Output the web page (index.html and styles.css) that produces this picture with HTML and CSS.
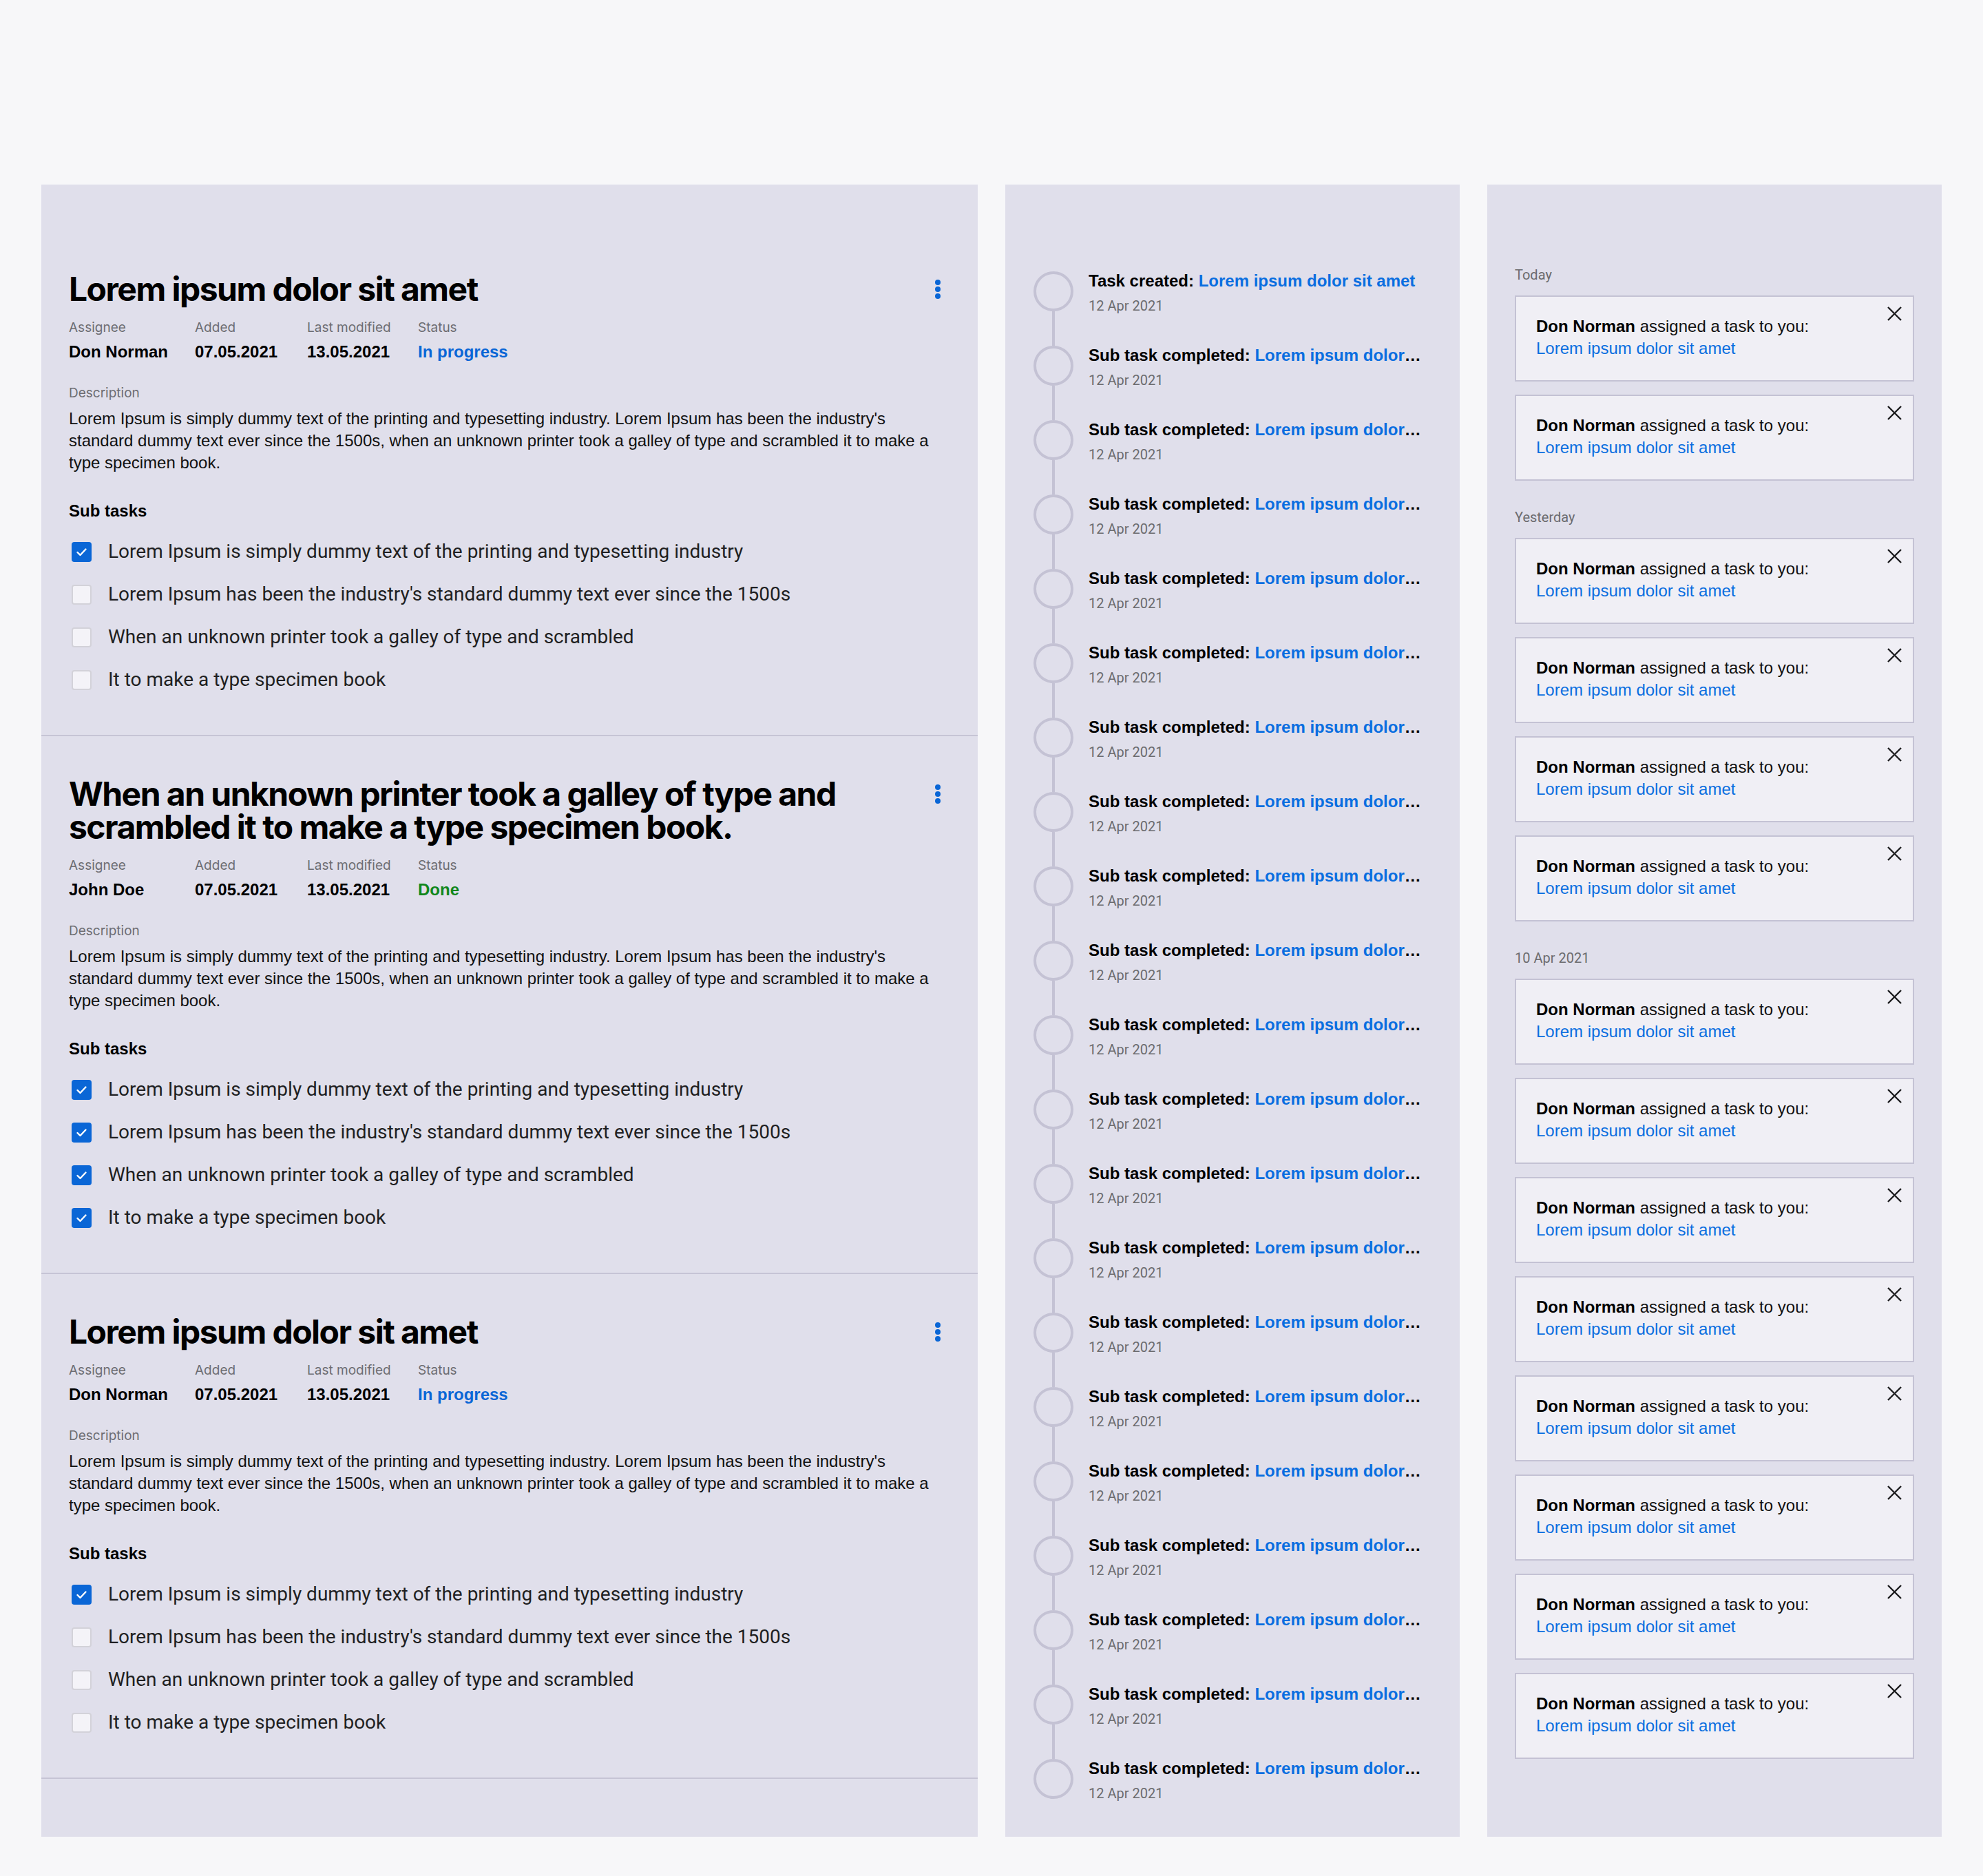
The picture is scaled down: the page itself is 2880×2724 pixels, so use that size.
FILE: index.html
```html
<!DOCTYPE html>
<html lang="en">
<head>
<meta charset="utf-8">
<title>Tasks</title>
<link rel="stylesheet" href="styles.css">
</head>
<body>
<main class="board">
  <section class="panel tasks">
    <article class="task">
      <header class="task-head">
        <h2 class="task-title">Lorem ipsum dolor sit amet</h2>
        <button class="kebab" aria-label="More"><svg width="24" height="32" viewBox="0 0 24 32"><circle cx="12" cy="6" r="4"/><circle cx="12" cy="16" r="4"/><circle cx="12" cy="26" r="4"/></svg></button>
      </header>
      <div class="meta">
        <div class="meta-col"><div class="meta-label">Assignee</div><div class="meta-value">Don Norman</div></div>
        <div class="meta-col"><div class="meta-label">Added</div><div class="meta-value">07.05.2021</div></div>
        <div class="meta-col"><div class="meta-label">Last modified</div><div class="meta-value">13.05.2021</div></div>
        <div class="meta-col"><div class="meta-label">Status</div><div class="meta-value status-progress">In progress</div></div>
      </div>
      <div class="desc-label">Description</div>
      <p class="desc">Lorem Ipsum is simply dummy text of the printing and typesetting industry. Lorem Ipsum has been the industry's standard dummy text ever since the 1500s, when an unknown printer took a galley of type and scrambled it to make a type specimen book.</p>
      <h3 class="sub-head">Sub tasks</h3>
      <ul class="subtasks">
        <li class="subtask"><span class="check on"><svg width="29" height="29" viewBox="0 0 29 29"><path d="M8.5 15 L12.5 19 L20.5 10.5"/></svg></span><span>Lorem Ipsum is simply dummy text of the printing and typesetting industry</span></li>
        <li class="subtask"><span class="check"></span><span>Lorem Ipsum has been the industry's standard dummy text ever since the 1500s</span></li>
        <li class="subtask"><span class="check"></span><span>When an unknown printer took a galley of type and scrambled</span></li>
        <li class="subtask"><span class="check"></span><span>It to make a type specimen book</span></li>
      </ul>
    </article>

    <article class="task">
      <header class="task-head">
        <h2 class="task-title">When an unknown printer took a galley of type and scrambled it to make a type specimen book.</h2>
        <button class="kebab" aria-label="More"><svg width="24" height="32" viewBox="0 0 24 32"><circle cx="12" cy="6" r="4"/><circle cx="12" cy="16" r="4"/><circle cx="12" cy="26" r="4"/></svg></button>
      </header>
      <div class="meta">
        <div class="meta-col"><div class="meta-label">Assignee</div><div class="meta-value">John Doe</div></div>
        <div class="meta-col"><div class="meta-label">Added</div><div class="meta-value">07.05.2021</div></div>
        <div class="meta-col"><div class="meta-label">Last modified</div><div class="meta-value">13.05.2021</div></div>
        <div class="meta-col"><div class="meta-label">Status</div><div class="meta-value status-done">Done</div></div>
      </div>
      <div class="desc-label">Description</div>
      <p class="desc">Lorem Ipsum is simply dummy text of the printing and typesetting industry. Lorem Ipsum has been the industry's standard dummy text ever since the 1500s, when an unknown printer took a galley of type and scrambled it to make a type specimen book.</p>
      <h3 class="sub-head">Sub tasks</h3>
      <ul class="subtasks">
        <li class="subtask"><span class="check on"><svg width="29" height="29" viewBox="0 0 29 29"><path d="M8.5 15 L12.5 19 L20.5 10.5"/></svg></span><span>Lorem Ipsum is simply dummy text of the printing and typesetting industry</span></li>
        <li class="subtask"><span class="check on"><svg width="29" height="29" viewBox="0 0 29 29"><path d="M8.5 15 L12.5 19 L20.5 10.5"/></svg></span><span>Lorem Ipsum has been the industry's standard dummy text ever since the 1500s</span></li>
        <li class="subtask"><span class="check on"><svg width="29" height="29" viewBox="0 0 29 29"><path d="M8.5 15 L12.5 19 L20.5 10.5"/></svg></span><span>When an unknown printer took a galley of type and scrambled</span></li>
        <li class="subtask"><span class="check on"><svg width="29" height="29" viewBox="0 0 29 29"><path d="M8.5 15 L12.5 19 L20.5 10.5"/></svg></span><span>It to make a type specimen book</span></li>
      </ul>
    </article>

    <article class="task">
      <header class="task-head">
        <h2 class="task-title">Lorem ipsum dolor sit amet</h2>
        <button class="kebab" aria-label="More"><svg width="24" height="32" viewBox="0 0 24 32"><circle cx="12" cy="6" r="4"/><circle cx="12" cy="16" r="4"/><circle cx="12" cy="26" r="4"/></svg></button>
      </header>
      <div class="meta">
        <div class="meta-col"><div class="meta-label">Assignee</div><div class="meta-value">Don Norman</div></div>
        <div class="meta-col"><div class="meta-label">Added</div><div class="meta-value">07.05.2021</div></div>
        <div class="meta-col"><div class="meta-label">Last modified</div><div class="meta-value">13.05.2021</div></div>
        <div class="meta-col"><div class="meta-label">Status</div><div class="meta-value status-progress">In progress</div></div>
      </div>
      <div class="desc-label">Description</div>
      <p class="desc">Lorem Ipsum is simply dummy text of the printing and typesetting industry. Lorem Ipsum has been the industry's standard dummy text ever since the 1500s, when an unknown printer took a galley of type and scrambled it to make a type specimen book.</p>
      <h3 class="sub-head">Sub tasks</h3>
      <ul class="subtasks">
        <li class="subtask"><span class="check on"><svg width="29" height="29" viewBox="0 0 29 29"><path d="M8.5 15 L12.5 19 L20.5 10.5"/></svg></span><span>Lorem Ipsum is simply dummy text of the printing and typesetting industry</span></li>
        <li class="subtask"><span class="check"></span><span>Lorem Ipsum has been the industry's standard dummy text ever since the 1500s</span></li>
        <li class="subtask"><span class="check"></span><span>When an unknown printer took a galley of type and scrambled</span></li>
        <li class="subtask"><span class="check"></span><span>It to make a type specimen book</span></li>
      </ul>
    </article>
  </section>

  <section class="panel timeline">
    <ol class="tl">
      <li class="tl-item"><div class="tl-rail"><span class="tl-dot"></span><span class="tl-line"></span></div><div class="tl-body"><div class="tl-title">Task created: <a href="#">Lorem ipsum dolor sit amet</a></div><div class="tl-date">12 Apr 2021</div></div></li>
      <li class="tl-item"><div class="tl-rail"><span class="tl-dot"></span><span class="tl-line"></span></div><div class="tl-body"><div class="tl-title">Sub task completed: <a href="#">Lorem ipsum dolor sit amet</a></div><div class="tl-date">12 Apr 2021</div></div></li>
      <li class="tl-item"><div class="tl-rail"><span class="tl-dot"></span><span class="tl-line"></span></div><div class="tl-body"><div class="tl-title">Sub task completed: <a href="#">Lorem ipsum dolor sit amet</a></div><div class="tl-date">12 Apr 2021</div></div></li>
      <li class="tl-item"><div class="tl-rail"><span class="tl-dot"></span><span class="tl-line"></span></div><div class="tl-body"><div class="tl-title">Sub task completed: <a href="#">Lorem ipsum dolor sit amet</a></div><div class="tl-date">12 Apr 2021</div></div></li>
      <li class="tl-item"><div class="tl-rail"><span class="tl-dot"></span><span class="tl-line"></span></div><div class="tl-body"><div class="tl-title">Sub task completed: <a href="#">Lorem ipsum dolor sit amet</a></div><div class="tl-date">12 Apr 2021</div></div></li>
      <li class="tl-item"><div class="tl-rail"><span class="tl-dot"></span><span class="tl-line"></span></div><div class="tl-body"><div class="tl-title">Sub task completed: <a href="#">Lorem ipsum dolor sit amet</a></div><div class="tl-date">12 Apr 2021</div></div></li>
      <li class="tl-item"><div class="tl-rail"><span class="tl-dot"></span><span class="tl-line"></span></div><div class="tl-body"><div class="tl-title">Sub task completed: <a href="#">Lorem ipsum dolor sit amet</a></div><div class="tl-date">12 Apr 2021</div></div></li>
      <li class="tl-item"><div class="tl-rail"><span class="tl-dot"></span><span class="tl-line"></span></div><div class="tl-body"><div class="tl-title">Sub task completed: <a href="#">Lorem ipsum dolor sit amet</a></div><div class="tl-date">12 Apr 2021</div></div></li>
      <li class="tl-item"><div class="tl-rail"><span class="tl-dot"></span><span class="tl-line"></span></div><div class="tl-body"><div class="tl-title">Sub task completed: <a href="#">Lorem ipsum dolor sit amet</a></div><div class="tl-date">12 Apr 2021</div></div></li>
      <li class="tl-item"><div class="tl-rail"><span class="tl-dot"></span><span class="tl-line"></span></div><div class="tl-body"><div class="tl-title">Sub task completed: <a href="#">Lorem ipsum dolor sit amet</a></div><div class="tl-date">12 Apr 2021</div></div></li>
      <li class="tl-item"><div class="tl-rail"><span class="tl-dot"></span><span class="tl-line"></span></div><div class="tl-body"><div class="tl-title">Sub task completed: <a href="#">Lorem ipsum dolor sit amet</a></div><div class="tl-date">12 Apr 2021</div></div></li>
      <li class="tl-item"><div class="tl-rail"><span class="tl-dot"></span><span class="tl-line"></span></div><div class="tl-body"><div class="tl-title">Sub task completed: <a href="#">Lorem ipsum dolor sit amet</a></div><div class="tl-date">12 Apr 2021</div></div></li>
      <li class="tl-item"><div class="tl-rail"><span class="tl-dot"></span><span class="tl-line"></span></div><div class="tl-body"><div class="tl-title">Sub task completed: <a href="#">Lorem ipsum dolor sit amet</a></div><div class="tl-date">12 Apr 2021</div></div></li>
      <li class="tl-item"><div class="tl-rail"><span class="tl-dot"></span><span class="tl-line"></span></div><div class="tl-body"><div class="tl-title">Sub task completed: <a href="#">Lorem ipsum dolor sit amet</a></div><div class="tl-date">12 Apr 2021</div></div></li>
      <li class="tl-item"><div class="tl-rail"><span class="tl-dot"></span><span class="tl-line"></span></div><div class="tl-body"><div class="tl-title">Sub task completed: <a href="#">Lorem ipsum dolor sit amet</a></div><div class="tl-date">12 Apr 2021</div></div></li>
      <li class="tl-item"><div class="tl-rail"><span class="tl-dot"></span><span class="tl-line"></span></div><div class="tl-body"><div class="tl-title">Sub task completed: <a href="#">Lorem ipsum dolor sit amet</a></div><div class="tl-date">12 Apr 2021</div></div></li>
      <li class="tl-item"><div class="tl-rail"><span class="tl-dot"></span><span class="tl-line"></span></div><div class="tl-body"><div class="tl-title">Sub task completed: <a href="#">Lorem ipsum dolor sit amet</a></div><div class="tl-date">12 Apr 2021</div></div></li>
      <li class="tl-item"><div class="tl-rail"><span class="tl-dot"></span><span class="tl-line"></span></div><div class="tl-body"><div class="tl-title">Sub task completed: <a href="#">Lorem ipsum dolor sit amet</a></div><div class="tl-date">12 Apr 2021</div></div></li>
      <li class="tl-item"><div class="tl-rail"><span class="tl-dot"></span><span class="tl-line"></span></div><div class="tl-body"><div class="tl-title">Sub task completed: <a href="#">Lorem ipsum dolor sit amet</a></div><div class="tl-date">12 Apr 2021</div></div></li>
      <li class="tl-item"><div class="tl-rail"><span class="tl-dot"></span><span class="tl-line"></span></div><div class="tl-body"><div class="tl-title">Sub task completed: <a href="#">Lorem ipsum dolor sit amet</a></div><div class="tl-date">12 Apr 2021</div></div></li>
      <li class="tl-item"><div class="tl-rail"><span class="tl-dot"></span><span class="tl-line"></span></div><div class="tl-body"><div class="tl-title">Sub task completed: <a href="#">Lorem ipsum dolor sit amet</a></div><div class="tl-date">12 Apr 2021</div></div></li>
    </ol>
  </section>

  <section class="panel notices">
    <div class="n-group">
      <div class="n-day">Today</div>
      <ul class="n-list">
        <li class="n-card"><p class="n-text"><b>Don Norman</b> assigned a task to you:<a href="#">Lorem ipsum dolor sit amet</a></p><button class="n-close" aria-label="Dismiss"><svg width="21" height="21" viewBox="0 0 21 21"><path d="M1 1 L20 20 M20 1 L1 20"/></svg></button></li>
        <li class="n-card"><p class="n-text"><b>Don Norman</b> assigned a task to you:<a href="#">Lorem ipsum dolor sit amet</a></p><button class="n-close" aria-label="Dismiss"><svg width="21" height="21" viewBox="0 0 21 21"><path d="M1 1 L20 20 M20 1 L1 20"/></svg></button></li>
      </ul>
    </div>
    <div class="n-group">
      <div class="n-day">Yesterday</div>
      <ul class="n-list">
        <li class="n-card"><p class="n-text"><b>Don Norman</b> assigned a task to you:<a href="#">Lorem ipsum dolor sit amet</a></p><button class="n-close" aria-label="Dismiss"><svg width="21" height="21" viewBox="0 0 21 21"><path d="M1 1 L20 20 M20 1 L1 20"/></svg></button></li>
        <li class="n-card"><p class="n-text"><b>Don Norman</b> assigned a task to you:<a href="#">Lorem ipsum dolor sit amet</a></p><button class="n-close" aria-label="Dismiss"><svg width="21" height="21" viewBox="0 0 21 21"><path d="M1 1 L20 20 M20 1 L1 20"/></svg></button></li>
        <li class="n-card"><p class="n-text"><b>Don Norman</b> assigned a task to you:<a href="#">Lorem ipsum dolor sit amet</a></p><button class="n-close" aria-label="Dismiss"><svg width="21" height="21" viewBox="0 0 21 21"><path d="M1 1 L20 20 M20 1 L1 20"/></svg></button></li>
        <li class="n-card"><p class="n-text"><b>Don Norman</b> assigned a task to you:<a href="#">Lorem ipsum dolor sit amet</a></p><button class="n-close" aria-label="Dismiss"><svg width="21" height="21" viewBox="0 0 21 21"><path d="M1 1 L20 20 M20 1 L1 20"/></svg></button></li>
      </ul>
    </div>
    <div class="n-group">
      <div class="n-day">10 Apr 2021</div>
      <ul class="n-list">
        <li class="n-card"><p class="n-text"><b>Don Norman</b> assigned a task to you:<a href="#">Lorem ipsum dolor sit amet</a></p><button class="n-close" aria-label="Dismiss"><svg width="21" height="21" viewBox="0 0 21 21"><path d="M1 1 L20 20 M20 1 L1 20"/></svg></button></li>
        <li class="n-card"><p class="n-text"><b>Don Norman</b> assigned a task to you:<a href="#">Lorem ipsum dolor sit amet</a></p><button class="n-close" aria-label="Dismiss"><svg width="21" height="21" viewBox="0 0 21 21"><path d="M1 1 L20 20 M20 1 L1 20"/></svg></button></li>
        <li class="n-card"><p class="n-text"><b>Don Norman</b> assigned a task to you:<a href="#">Lorem ipsum dolor sit amet</a></p><button class="n-close" aria-label="Dismiss"><svg width="21" height="21" viewBox="0 0 21 21"><path d="M1 1 L20 20 M20 1 L1 20"/></svg></button></li>
        <li class="n-card"><p class="n-text"><b>Don Norman</b> assigned a task to you:<a href="#">Lorem ipsum dolor sit amet</a></p><button class="n-close" aria-label="Dismiss"><svg width="21" height="21" viewBox="0 0 21 21"><path d="M1 1 L20 20 M20 1 L1 20"/></svg></button></li>
        <li class="n-card"><p class="n-text"><b>Don Norman</b> assigned a task to you:<a href="#">Lorem ipsum dolor sit amet</a></p><button class="n-close" aria-label="Dismiss"><svg width="21" height="21" viewBox="0 0 21 21"><path d="M1 1 L20 20 M20 1 L1 20"/></svg></button></li>
        <li class="n-card"><p class="n-text"><b>Don Norman</b> assigned a task to you:<a href="#">Lorem ipsum dolor sit amet</a></p><button class="n-close" aria-label="Dismiss"><svg width="21" height="21" viewBox="0 0 21 21"><path d="M1 1 L20 20 M20 1 L1 20"/></svg></button></li>
        <li class="n-card"><p class="n-text"><b>Don Norman</b> assigned a task to you:<a href="#">Lorem ipsum dolor sit amet</a></p><button class="n-close" aria-label="Dismiss"><svg width="21" height="21" viewBox="0 0 21 21"><path d="M1 1 L20 20 M20 1 L1 20"/></svg></button></li>
        <li class="n-card"><p class="n-text"><b>Don Norman</b> assigned a task to you:<a href="#">Lorem ipsum dolor sit amet</a></p><button class="n-close" aria-label="Dismiss"><svg width="21" height="21" viewBox="0 0 21 21"><path d="M1 1 L20 20 M20 1 L1 20"/></svg></button></li>
      </ul>
    </div>
  </section>
</main>
</body>
</html>
```

FILE: styles.css
```css
*, *::before, *::after { box-sizing: border-box; }

html, body { margin: 0; }
body {
  background: #f7f7f9;
  font-family: Inter, "Liberation Sans", sans-serif;
  color: #000;
}

.board {
  display: flex;
  gap: 40px;
  align-items: stretch;
  padding: 268px 60px 60px;
}

.panel { background: #e0dfeb; }

/* ---------- Tasks ---------- */
.tasks {
  width: 1360px;
  flex: none;
  padding: 68px 0 81px;
}

.task {
  padding: 60px 46px 61px 40px;
  border-bottom: 2px solid #c6c4d5;
}

.task-head {
  display: flex;
  justify-content: space-between;
  align-items: flex-start;
  gap: 24px;
}

.task-title {
  margin: 0;
  font: 700 48px/48px Inter, "Liberation Sans", sans-serif;
  letter-spacing: -0.032em;
  color: #000;
}

.kebab {
  flex: none;
  margin: 8px 0 0;
  padding: 0;
  border: 0;
  background: none;
  line-height: 0;
}
.kebab svg { display: block; fill: #0a66d6; }

.meta {
  display: grid;
  grid-template-columns: 183px 163px 161px auto;
  margin-top: 22px;
}
.meta-label {
  font: 400 19px/20px Inter, sans-serif;
  color: #6d6d72;
}
.meta-value {
  margin-top: 11px;
  font: 700 24px/28px "Liberation Sans", Arial, sans-serif;
  color: #000;
}
.status-progress { color: #0a66d6; }
.status-done { color: #11871b; }

.desc-label {
  margin-top: 36px;
  font: 400 19px/20px Inter, sans-serif;
  color: #6d6d72;
}
.desc {
  margin: 11px 0 0;
  max-width: 1268px;
  font: 400 24px/32px "Liberation Sans", Arial, sans-serif;
  color: #111;
}

.sub-head {
  margin: 40px 0 0;
  font: 700 24px/28px "Liberation Sans", Arial, sans-serif;
  color: #000;
}

.subtasks {
  list-style: none;
  margin: 26px 0 0;
  padding: 0;
  display: flex;
  flex-direction: column;
  gap: 24px;
}
.subtask {
  display: flex;
  align-items: center;
  gap: 24px;
  font: 400 28px/38px Roboto, sans-serif;
  color: #1f1f22;
}
.check {
  flex: none;
  width: 29px;
  height: 29px;
  margin-left: 4px;
  border-radius: 4px;
  border: 2px solid #d3d2d9;
  background: #f4f3f8;
}
.check.on {
  border: 0;
  background: #0a66d6;
}
.check svg {
  display: block;
  fill: none;
  stroke: #fff;
  stroke-width: 2.4;
  stroke-linecap: round;
  stroke-linejoin: round;
}

/* ---------- Timeline ---------- */
.timeline {
  width: 660px;
  flex: none;
  padding: 126px 53px 51px 41px;
}
.tl {
  list-style: none;
  margin: 0;
  padding: 0;
}
.tl-item {
  display: flex;
  gap: 22px;
}
.tl-rail {
  flex: none;
  width: 58px;
  display: flex;
  flex-direction: column;
  align-items: center;
}
.tl-dot {
  width: 58px;
  height: 58px;
  border: 4px solid #c4c2d4;
  border-radius: 50%;
}
.tl-line {
  width: 4px;
  height: 50px;
  background: #c4c2d4;
}
.tl-item:last-child .tl-line { display: none; }

.tl-body {
  width: 486px;
  min-width: 0;
}
.tl-title {
  font: 700 24px/28px "Liberation Sans", Arial, sans-serif;
  color: #000;
  white-space: nowrap;
  overflow: hidden;
  text-overflow: ellipsis;
}
.tl-title a {
  color: #0a6ee0;
  text-decoration: none;
}
.tl-date {
  margin-top: 10px;
  font: 400 20px/24px Roboto, sans-serif;
  color: #6b6b6e;
}

/* ---------- Notifications ---------- */
.notices {
  width: 660px;
  flex: none;
  padding: 119px 40px 40px;
}
.n-group + .n-group { margin-top: 41px; }
.n-day {
  font: 400 20px/24px Roboto, sans-serif;
  color: #6b6b6e;
}
.n-list {
  list-style: none;
  margin: 18px 0 0;
  padding: 0;
  display: flex;
  flex-direction: column;
  gap: 19px;
}
.n-card {
  display: flex;
  justify-content: space-between;
  align-items: flex-start;
  height: 125px;
  padding: 14px 16px 30px 29px;
  background: #f0eff5;
  border: 2px solid #c4c2d4;
}
.n-text {
  margin: 13px 0 0;
  font: 400 24px/32px "Liberation Sans", Arial, sans-serif;
  color: #111;
}
.n-text b { font-weight: 700; color: #000; }
.n-text a {
  display: block;
  color: #0a6ee0;
  text-decoration: none;
}
.n-close {
  flex: none;
  padding: 0;
  border: 0;
  background: none;
  line-height: 0;
}
.n-close svg {
  display: block;
  stroke: #1d1d1f;
  stroke-width: 2.4;
  fill: none;
}
```
